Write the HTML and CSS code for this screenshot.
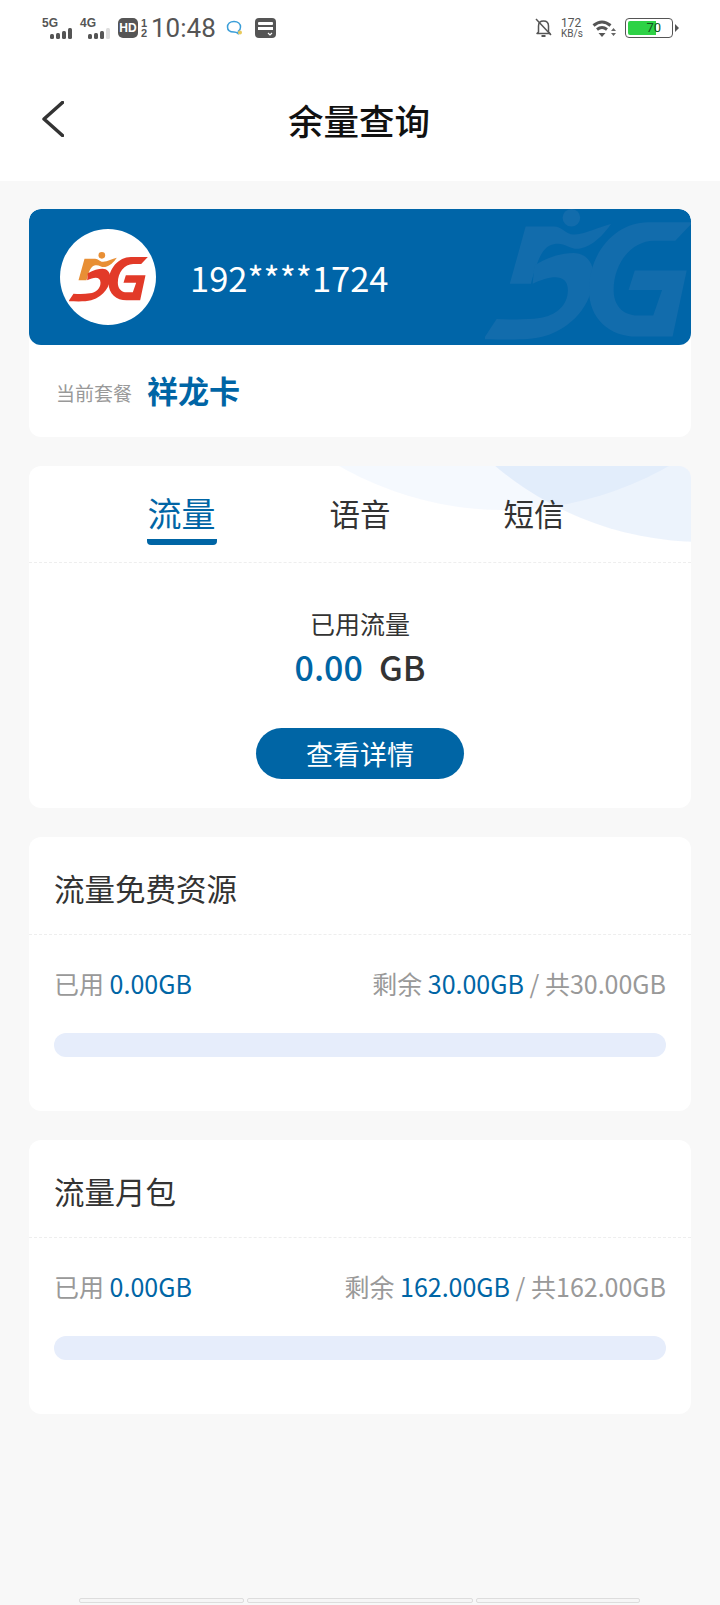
FILE: index.html
```html
<!DOCTYPE html>
<html lang="zh-CN">
<head>
    <meta charset="UTF-8">
    <meta name="viewport" content="width=device-width, initial-scale=1.0">
    <title>余量查询</title>
    <link rel="stylesheet" href="styles.css">
</head>
<body>
    <svg class="defs" width="0" height="0">
        <symbol id="logo5g" viewBox="0 0 236 150">
            <circle class="logo-a" cx="98" cy="10" r="10"/>
            <path class="logo-a" d="M46 20H78C88 20 92 30 102 29C115 28 130 20 143 17C134 30 122 42 108 45C96 47 90 37 78 40C66 42 60 55 52 85H28Z"/>
            <path class="logo-b" d="M56 64C72 54 88 50 100 50C114 50 124 60 123 78C122 100 108 132 66 145C48 150 18 148 -2 148L13 125C30 126 48 126 62 124C80 121 94 110 94 92C94 74 76 74 54 85Z"/>
            <path class="logo-b" d="M236 15H185C148 15 118 50 118 92C118 125 142 145 172 145H213L229 70H170L163 92H201L191 121H174C155 121 146 108 146 92C146 62 166 36 192 36H216Z"/>
        </symbol>
    </svg>

    <header class="top">
        <div class="status-bar">
            <div class="status-left">
                <div class="signal">
                    <span class="signal-name">5G</span>
                    <svg class="signal-bars" width="24" height="11" viewBox="0 0 24 11">
                        <rect x="0" y="6" width="4" height="5" rx="1.5"/>
                        <rect x="6" y="5" width="4" height="6" rx="1.5"/>
                        <rect x="12" y="3" width="4" height="8" rx="1.5"/>
                        <rect x="18" y="0" width="4" height="11" rx="1.5"/>
                    </svg>
                </div>
                <div class="signal">
                    <span class="signal-name">4G</span>
                    <svg class="signal-bars" width="24" height="11" viewBox="0 0 24 11">
                        <rect x="0" y="6" width="4" height="5" rx="1.5"/>
                        <rect x="6" y="5" width="4" height="6" rx="1.5"/>
                        <rect x="12" y="3" width="4" height="8" rx="1.5"/>
                        <rect x="18" y="0" width="4" height="11" rx="1.5" fill="#ddd"/>
                    </svg>
                </div>
                <span class="hd">HD</span>
                <span class="hd-nums"><span>1</span><span>2</span></span>
                <span class="time">10:48</span>
                <svg class="chat-icon" width="18" height="16" viewBox="0 0 18 16">
                    <path d="M8 1.5C4 1.5 1.5 4 1.5 7C1.5 10 4 12 8 12C9.5 12 11 12.5 12 13.5L12.500 11C14 10 14.500 8.500 14.500 7C14.500 4 12 1.500 8 1.500Z" fill="none" stroke="#3a9ed8" stroke-width="1.500"/>
                    <circle cx="14" cy="12.500" r="2" fill="#e8c95a"/>
                </svg>
                <svg class="sim-icon" width="21" height="20" viewBox="0 0 21 20">
                    <rect width="21" height="20" rx="4" fill="#555"/>
                    <rect x="3" y="4" width="15" height="3" rx="1" fill="#fff"/>
                    <rect x="3" y="9" width="15" height="3" fill="#fff"/>
                    <path d="M13 15L15 17L17 15" fill="none" stroke="#fff" stroke-width="1.200"/>
                </svg>
            </div>
            <div class="status-right">
                <svg class="bell" width="17" height="20" viewBox="0 0 17 20">
                    <path d="M3.500 14V8C3.500 5 5.500 3 8.500 3C11.500 3 13.500 5 13.500 8V14L15 15.500H2L3.500 14Z" fill="none" stroke="#555" stroke-width="1.500" stroke-linejoin="round"/>
                    <path d="M1 1L16 17" stroke="#555" stroke-width="1.500"/>
                    <path d="M6.500 18H10.500" stroke="#555" stroke-width="2"/>
                </svg>
                <div class="speed"><span class="speed-num">172</span><span class="speed-unit">KB/s</span></div>
                <svg class="wifi" width="25" height="19" viewBox="0 0 25 19">
                    <path d="M1.500 6.500Q10 -0.500 18.500 6.500" fill="none" stroke="#555" stroke-width="3"/>
                    <path d="M5 10.500Q10 6.500 15 10.500" fill="none" stroke="#555" stroke-width="3"/>
                    <path d="M6.500 14H13.500L10 18Z" fill="#555"/>
                    <path d="M21.500 9L24 12H19Z M19 14H24L21.500 17Z" fill="#666"/>
                </svg>
                <div class="battery">
                    <div class="battery-fill"></div>
                    <span class="battery-num">70</span>
                </div>
                <span class="battery-tip"></span>
            </div>
        </div>
        <nav class="nav-bar">
            <svg class="back" width="22" height="36" viewBox="0 0 22 36">
                <path d="M20.500 1.500L2 18L20.500 34.500" fill="none" stroke="#333" stroke-width="3.500" stroke-linecap="round" stroke-linejoin="round"/>
            </svg>
            <h1>余量查询</h1>
        </nav>
    </header>

    <main class="content">
        <section class="card user-card">
            <div class="user-banner">
                <svg class="watermark" width="208" height="132"><use href="#logo5g"/></svg>
                <div class="avatar">
                    <svg width="79" height="50"><use href="#logo5g"/></svg>
                </div>
                <span class="phone">192****1724</span>
            </div>
            <div class="plan">
                <span class="plan-label">当前套餐</span>
                <span class="plan-name">祥龙卡</span>
            </div>
        </section>

        <section class="card usage-card">
            <span class="deco deco-light"></span>
            <span class="deco deco-dark"></span>
            <div class="tabs">
                <a class="tab active" href="#">流量</a>
                <a class="tab" href="#">语音</a>
                <a class="tab" href="#">短信</a>
            </div>
            <div class="usage">
                <div class="usage-label">已用流量</div>
                <div class="usage-value"><span class="blue">0.00</span><span class="unit">GB</span></div>
                <a class="detail-btn" href="#">查看详情</a>
            </div>
        </section>

        <section class="card res-card">
            <h2>流量免费资源</h2>
            <div class="res-row">
                <span>已用 <span class="blue">0.00GB</span></span>
                <span>剩余 <span class="blue">30.00GB</span> / 共30.00GB</span>
            </div>
            <div class="res-bar"></div>
        </section>

        <section class="card res-card">
            <h2>流量月包</h2>
            <div class="res-row">
                <span>已用 <span class="blue">0.00GB</span></span>
                <span>剩余 <span class="blue">162.00GB</span> / 共162.00GB</span>
            </div>
            <div class="res-bar"></div>
        </section>
    </main>

    <footer class="bottom-bars">
        <span class="bottom-bar bar-a"></span>
        <span class="bottom-bar bar-b"></span>
        <span class="bottom-bar bar-c"></span>
    </footer>
</body>
</html>
```
FILE: styles.css
```css
* {
    box-sizing: border-box;
}
body {
    font-family: "Noto Sans CJK SC", "Noto Sans", sans-serif;
    background-color: #f8f8f8;
    margin: 0;
    padding: 0;
    height: 1605px;
    display: flex;
    flex-direction: column;
    overflow: hidden;
    color: #333;
}
a {
    text-decoration: none;
}
.defs {
    position: absolute;
}
.logo-a {
    fill: var(--logo-a, #e88f35);
}
.logo-b {
    fill: var(--logo-b, #e23a28);
}
.blue {
    color: #0065a5;
}

/* status bar */
.top {
    background-color: #fff;
    height: 181px;
    flex-shrink: 0;
}
.status-bar {
    height: 56px;
    padding: 0 41px 0 42px;
    display: flex;
    justify-content: space-between;
    align-items: center;
}
.status-left, .status-right {
    display: flex;
    align-items: center;
}
.signal {
    width: 38px;
    display: flex;
    flex-direction: column;
}
.signal-name {
    font-family: "Liberation Sans", sans-serif;
    font-size: 12px;
    font-weight: bold;
    line-height: 10px;
    color: #555;
}
.signal-bars {
    margin-left: 8px;
    fill: #555;
}
.hd {
    width: 20px;
    height: 20px;
    background-color: #555;
    border-radius: 5px;
    color: #fff;
    font-family: "Liberation Sans", sans-serif;
    font-size: 12px;
    font-weight: bold;
    line-height: 20px;
    text-align: center;
}
.hd-nums {
    display: flex;
    flex-direction: column;
    width: 13px;
    padding-left: 3px;
    font-family: "Liberation Sans", sans-serif;
    font-size: 11px;
    font-weight: bold;
    line-height: 10px;
    color: #555;
}
.time {
    font-family: Roboto, sans-serif;
    font-size: 26px;
    color: #555;
}
.chat-icon {
    margin-left: 10px;
}
.sim-icon {
    margin-left: 11px;
}
.bell {
    margin-right: 9px;
}
.speed {
    width: 31px;
    display: flex;
    flex-direction: column;
    font-family: Roboto, sans-serif;
    color: #555;
}
.speed-num {
    font-size: 12px;
    line-height: 11px;
}
.speed-unit {
    font-size: 10px;
    line-height: 10px;
}
.wifi {
    margin-right: 8px;
}
.battery {
    position: relative;
    width: 48px;
    height: 20px;
    border: 1px solid #555;
    border-radius: 4px;
    padding: 2px;
}
.battery-fill {
    width: 67%;
    height: 100%;
    background-color: #2ed246;
    border-radius: 2px 0 0 2px;
}
.battery-num {
    position: absolute;
    top: 0;
    right: 11px;
    font-family: Roboto, sans-serif;
    font-size: 13px;
    line-height: 18px;
    color: #14561f;
}
.battery-tip {
    width: 0;
    height: 0;
    margin-left: 2px;
    border-left: 4px solid #555;
    border-top: 4px solid transparent;
    border-bottom: 4px solid transparent;
}

/* title */
.nav-bar {
    height: 125px;
    padding-left: 42px;
    display: flex;
    align-items: center;
}
.nav-bar h1 {
    flex: 1;
    margin: 0;
    padding: 2px 66px 0 0;
    text-align: center;
    font-size: 35.5px;
    font-weight: 500;
    line-height: 50px;
    color: #111;
}

/* cards */
.content {
    flex: 1;
    padding: 28px 29px 0;
    display: flex;
    flex-direction: column;
    gap: 29px;
}
.card {
    position: relative;
    background-color: #fff;
    border-radius: 12px;
    overflow: hidden;
}
.user-card {
    height: 228px;
}
.user-banner {
    position: relative;
    height: 136px;
    padding-left: 31px;
    display: flex;
    align-items: center;
    background-color: #0065a8;
    border-radius: 12px;
    overflow: hidden;
}
.watermark {
    position: absolute;
    left: 456px;
    top: 0;
    --logo-a: #126cac;
    --logo-b: #126cac;
}
.avatar {
    width: 96px;
    height: 96px;
    background-color: #fff;
    border-radius: 50%;
    display: flex;
    align-items: center;
    justify-content: center;
}
.phone {
    position: relative;
    margin-left: 34px;
    font-size: 34.5px;
    color: #fff;
    line-height: 40px;
}
.plan {
    height: 92px;
    padding: 0 0 4px 27px;
    display: flex;
    align-items: center;
}
.plan-label {
    font-size: 19px;
    color: #999;
    padding-top: 6px;
}
.plan-name {
    margin-left: 15px;
    font-size: 31px;
    font-weight: 700;
    color: #0065a5;
}

.usage-card {
    height: 342px;
}
.deco {
    position: absolute;
    border-radius: 50%;
}
.deco-light {
    left: 144px;
    top: -618px;
    width: 662px;
    height: 662px;
    background-color: rgba(0,90,220,0.04);
}
.deco-dark {
    left: 352px;
    top: -568px;
    width: 644px;
    height: 644px;
    background-color: rgba(0,90,220,0.075);
}
.tabs {
    position: relative;
    height: 97px;
    padding-right: 9px;
    border-bottom: 1px dashed #eee;
    display: flex;
    justify-content: center;
    gap: 113px;
}
.tab {
    padding-top: 25px;
    font-size: 30.5px;
    line-height: 44px;
    color: #333;
}
.tab.active {
    height: 79px;
    padding: 25px 1px 0;
    font-size: 34px;
    color: #0065a5;
    border-bottom: 6px solid #0065a5;
    border-radius: 0 0 4px 4px;
}
.usage {
    padding-top: 45px;
    display: flex;
    flex-direction: column;
    align-items: center;
}
.usage-label {
    font-size: 25px;
    line-height: 30px;
}
.usage-value {
    margin-top: 4px;
    font-size: 34px;
    font-weight: 500;
    line-height: 50px;
}
.unit {
    margin-left: 16px;
}
.detail-btn {
    margin-top: 36px;
    width: 208px;
    height: 51px;
    border-radius: 26px;
    background-color: #0065a5;
    color: #fff;
    font-size: 27px;
    line-height: 51px;
    text-align: center;
}

.res-card {
    height: 274px;
}
.res-card h2 {
    margin: 0;
    height: 98px;
    padding-left: 25px;
    border-bottom: 1px dashed #eee;
    font-size: 30.5px;
    font-weight: 400;
    line-height: 102px;
}
.res-row {
    margin-top: 30px;
    padding: 0 25px;
    display: flex;
    justify-content: space-between;
    font-size: 25px;
    line-height: 36px;
    color: #999;
}
.res-bar {
    margin: 32px 25px 0;
    height: 24px;
    background-color: #e6edfb;
    border-radius: 12px;
}

/* bottom */
.bottom-bars {
    flex-shrink: 0;
    height: 7px;
    padding-left: 79px;
    display: flex;
    gap: 3px;
}
.bottom-bar {
    height: 5px;
    background-color: #f6f6f6;
    border: 1px solid #ddd;
    border-radius: 2px;
}
.bar-a {
    width: 165px;
}
.bar-b {
    width: 226px;
}
.bar-c {
    width: 164px;
}
```
